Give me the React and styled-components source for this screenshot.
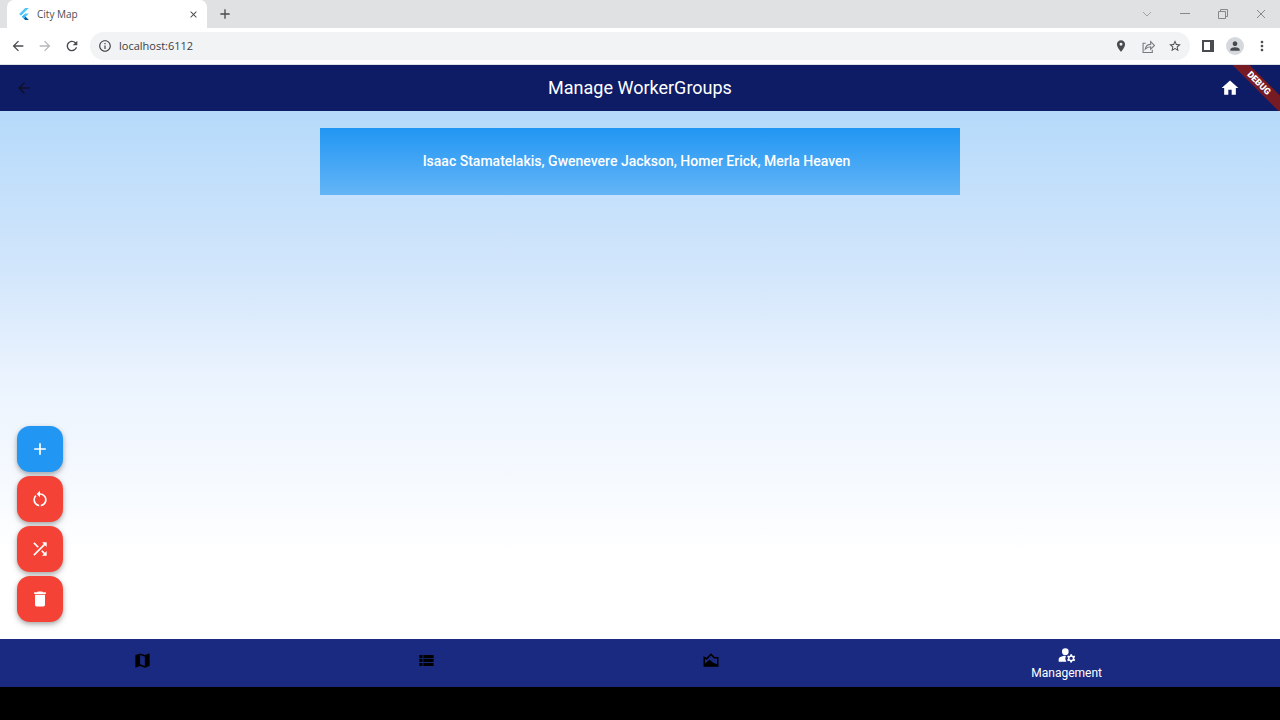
import React from "react";
import styled, { createGlobalStyle, css } from "styled-components";
import {
  MdAdd, MdArrowBack, MdArrowForward, MdRefresh, MdInfoOutline, MdClose, MdHome,
  MdRestartAlt, MdShuffle, MdDelete, MdMap, MdViewList, MdManageAccounts,
  MdLocationOn, MdStarBorder, MdPerson, MdMoreVert,
} from "react-icons/md";

const GlobalStyle = createGlobalStyle`
  *, *::before, *::after { box-sizing: border-box; }
  html, body, #root { height: 100%; }
  body {
    margin: 0;
    background: #000;
    font-family: Roboto, "Open Sans", sans-serif;
  }
  button, input { font: inherit; color: inherit; }
  svg { display: block; flex: none; }
`;

const Page = styled.div`
  min-height: 100%;
  display: flex;
  flex-direction: column;
  padding-bottom: 33px;
  background: #000;
`;

const PlainButton = styled.button`
  display: flex;
  align-items: center;
  justify-content: center;
  padding: 0;
  border: 0;
  background: transparent;
  color: ${(p) => p.$color || "#484b4f"};
  width: ${(p) => p.$width || 24}px;
  height: 24px;
  cursor: pointer;
`;

const TabStrip = styled.div`
  display: flex;
  align-items: center;
  height: 28px;
  padding-left: 7px;
  background: #dfe1e2;
`;

const BrowserTab = styled.div`
  display: flex;
  align-items: center;
  gap: 7px;
  width: 200px;
  height: 28px;
  padding: 0 2px 0 11px;
  border-radius: 7px 7px 0 0;
  background: #fff;
  color: #4b4e52;
  font: 10px/16px "Open Sans", sans-serif;
`;

const TabTitle = styled.span`
  flex: 1;
`;

const WindowControls = styled.div`
  display: flex;
  gap: 14px;
  margin-left: auto;
  padding-right: 7px;
`;

const Toolbar = styled.div`
  display: flex;
  align-items: center;
  height: 37px;
  padding: 0 6px;
  background: #fff;
  border-bottom: 1px solid #dee1e6;
`;

const NavButtons = styled.div`
  display: flex;
  gap: 3px;
  margin-right: 6px;
`;

const AddressBar = styled.label`
  display: flex;
  align-items: center;
  flex: 1;
  gap: 7px;
  height: 28px;
  padding: 0 3px 0 8px;
  border-radius: 14px;
  background: #f1f3f4;
  color: #3c4043;
`;

const AddressInput = styled.input`
  flex: 1;
  min-width: 0;
  padding: 0;
  border: 0;
  outline: 0;
  background: transparent;
  font: 11px/16px "Open Sans", sans-serif;
`;

const ToolbarGroup = styled.div`
  display: flex;
  gap: 3px;
  margin-left: ${(p) => p.$offset || 0}px;
`;

const Avatar = styled.span`
  display: grid;
  place-items: center;
  width: 18px;
  height: 18px;
  border-radius: 50%;
  background: #d5d9dd;
`;

const AppBar = styled.header`
  position: relative;
  display: grid;
  grid-template-columns: 48px 1fr 48px;
  align-items: center;
  height: 46px;
  overflow: hidden;
  background: #0e1c66;
  color: #fff;
`;

const AppTitle = styled.h1`
  margin: 0;
  text-align: center;
  font: 400 18px/24px Roboto, sans-serif;
`;

const HomeButton = styled(PlainButton)`
  margin-left: -14px;
`;

const BackButton = styled(PlainButton)`
  margin-left: 12px;
`;

const DebugBanner = styled.span`
  position: absolute;
  top: 12px;
  right: -24px;
  width: 90px;
  transform: rotate(45deg);
  background: #761a24;
  text-align: center;
  font: 900 9px/12px Roboto, sans-serif;
`;

const Content = styled.main`
  position: relative;
  flex: 1;
  padding: 17px 25%;
  background: linear-gradient(#b5dafa 0%, #d2e6fb 30%, #eaf3fe 50%, #fff 85%);
`;

const GroupCard = styled.button`
  display: block;
  width: 100%;
  height: 67px;
  padding: 0 7px 2px 0;
  border: 0;
  background: linear-gradient(#2196f3, #64b5f6);
  color: #fff;
  font: 500 14px/20px Roboto, sans-serif;
  cursor: pointer;
`;

const ActionStack = styled.div`
  position: absolute;
  left: 17px;
  bottom: 17px;
  display: flex;
  flex-direction: column;
  gap: 4px;
`;

const ActionButton = styled.button`
  display: grid;
  place-items: center;
  width: 46px;
  height: 46px;
  padding: 0;
  border: 0;
  border-radius: 13px;
  background: ${(p) => (p.$primary ? "#2196f3" : "#f44336")};
  color: #fff;
  box-shadow: 0 2px 4px rgba(0, 0, 0, 0.26), 0 3px 8px rgba(0, 0, 0, 0.12);
  cursor: pointer;
`;

const BottomNav = styled.nav`
  display: grid;
  grid-template-columns: 2fr 2fr 2fr 3fr;
  height: 48px;
  background: #1a2a80;
`;

const NavItem = styled.a`
  display: flex;
  flex-direction: column;
  align-items: center;
  padding-top: 12px;
  color: #000;
  text-decoration: none;
  font: 400 12px/16px Roboto, sans-serif;
  ${(p) => p.$active && css`
    padding-top: 6px;
    color: #fff;
  `}
`;

const FlutterLogo = () => (
  <svg width="12" height="12" viewBox="0 0 24 24" aria-hidden="true">
    <path fill="#54c5f8" d="M14.3 0 2.3 12 6 15.7 21.7 0zM14.3 11.1 7.9 17.5l3.7 3.7 10.1-10.1z" />
    <path fill="#01579b" d="m11.6 21.2 2.7 2.8h7.4l-6.4-6.5z" />
    <path fill="#29b6f6" d="m7.9 17.5 3.7-3.7 3.7 3.7-3.7 3.7z" />
  </svg>
);

const Line = ({ d, size = 12, width = 1 }) => (
  <svg width={size} height={size} viewBox="0 0 12 12" fill="none" stroke="currentColor" strokeWidth={width} aria-hidden="true">
    <path d={d} />
  </svg>
);

const LandscapeChart = () => (
  <svg width="18" height="18" viewBox="0 0 24 24" aria-hidden="true">
    <path
      fill="currentColor"
      fillRule="evenodd"
      d="M2 7l4 2 6-6 5 5h5v13H2zM4 10.500v6l6-5 5 4 5 2V10h-4l-4-4-5.500 5.500z"
    />
  </svg>
);

export default function App() {
  return (
    <>
      <GlobalStyle />
      <Page>
        <TabStrip>
          <BrowserTab>
            <FlutterLogo />
            <TabTitle>City Map</TabTitle>
            <PlainButton aria-label="Close tab"><MdClose size={11} /></PlainButton>
          </BrowserTab>
          <PlainButton aria-label="New tab" $width={36}><MdAdd size={16} /></PlainButton>
          <WindowControls>
            <PlainButton aria-label="Search tabs" $color="#a0a2a5"><Line d="M2 4l4 4 4-4" /></PlainButton>
            <PlainButton aria-label="Minimize" $color="#888"><Line d="M1 5.500h10" /></PlainButton>
            <PlainButton aria-label="Restore" $color="#888"><Line d="M1.500 3.500h7v7h-7zM3.500 3.500v-2h7v7h-2" /></PlainButton>
            <PlainButton aria-label="Close window" $color="#888"><Line d="M2 2l8 8M10 2l-8 8" /></PlainButton>
          </WindowControls>
        </TabStrip>
        <Toolbar>
          <NavButtons>
            <PlainButton aria-label="Back"><MdArrowBack size={16} /></PlainButton>
            <PlainButton aria-label="Forward" $color="#b5b8bc"><MdArrowForward size={16} /></PlainButton>
            <PlainButton aria-label="Reload"><MdRefresh size={16} /></PlainButton>
          </NavButtons>
          <AddressBar>
            <MdInfoOutline size={14} />
            <AddressInput aria-label="Address" defaultValue="localhost:6112" />
            <ToolbarGroup>
              <PlainButton aria-label="Location"><MdLocationOn size={14} /></PlainButton>
              <PlainButton aria-label="Share" $color="#777a7e">
                <Line size={13} d="M3.500 3H1v8.500h8.500V9M3 8.500c.5-3 2.500-4.500 5-4.500V1.500L11.500 5 8 8.500V6.200C6 6.200 4.500 7 3 8.500z" />
              </PlainButton>
              <PlainButton aria-label="Bookmark"><MdStarBorder size={14} /></PlainButton>
            </ToolbarGroup>
          </AddressBar>
          <ToolbarGroup $offset={6}>
            <PlainButton aria-label="Side panel">
              <svg width="12" height="12" viewBox="0 0 12 12" aria-hidden="true">
                <path fill="currentColor" fillRule="evenodd" d="M0 0h12v12H0zM2 2v8h6V2z" />
              </svg>
            </PlainButton>
            <PlainButton aria-label="Profile"><Avatar><MdPerson size={14} /></Avatar></PlainButton>
            <PlainButton aria-label="Browser menu"><MdMoreVert size={16} /></PlainButton>
          </ToolbarGroup>
        </Toolbar>
        <AppBar>
          <BackButton aria-label="Go back" $color="#10102a"><MdArrowBack size={18} /></BackButton>
          <AppTitle>Manage WorkerGroups</AppTitle>
          <HomeButton aria-label="Home" $color="#fff"><MdHome size={20} /></HomeButton>
          <DebugBanner>DEBUG</DebugBanner>
        </AppBar>
        <Content>
          <GroupCard>Isaac Stamatelakis, Gwenevere Jackson, Homer Erick, Merla Heaven</GroupCard>
          <ActionStack>
            <ActionButton $primary aria-label="Add group"><MdAdd size={20} /></ActionButton>
            <ActionButton aria-label="Reset groups"><MdRestartAlt size={20} /></ActionButton>
            <ActionButton aria-label="Shuffle groups"><MdShuffle size={20} /></ActionButton>
            <ActionButton aria-label="Delete groups"><MdDelete size={20} /></ActionButton>
          </ActionStack>
        </Content>
        <BottomNav>
          <NavItem href="#map" aria-label="Map"><MdMap size={19} /></NavItem>
          <NavItem href="#list" aria-label="List"><MdViewList size={19} /></NavItem>
          <NavItem href="#chart" aria-label="Chart"><LandscapeChart /></NavItem>
          <NavItem href="#management" $active><MdManageAccounts size={20} />Management</NavItem>
        </BottomNav>
      </Page>
    </>
  );
}
